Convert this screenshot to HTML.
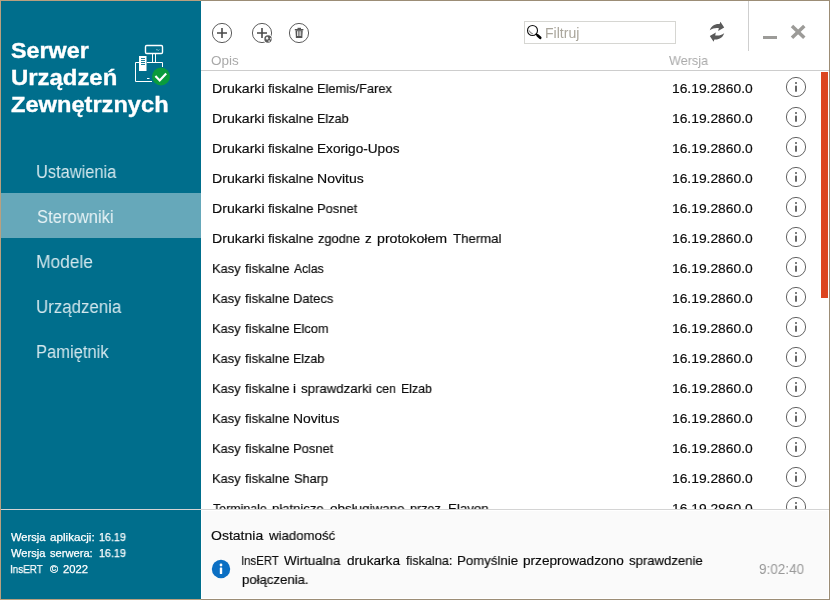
<!DOCTYPE html>
<html><head><meta charset="utf-8">
<style>
html,body{margin:0;padding:0;}
body{width:830px;height:600px;position:relative;overflow:hidden;background:#fff;font-family:"Liberation Sans",sans-serif;}
.abs{position:absolute;}
.t{position:absolute;white-space:nowrap;line-height:1;transform-origin:0 0;will-change:transform;}
#frame{left:0;top:0;width:828px;height:598px;border:1px solid #9c8d76;z-index:50;}
#frameL{left:0;top:0;width:200px;height:598px;border:1px solid #b9a07f;border-right:none;z-index:51;}
#side{left:1px;top:1px;width:200px;height:598px;background:#006e8c;}
#sel{left:1px;top:193px;width:200px;height:45px;background:#66a8ba;}
#hline{left:201px;top:70px;width:628px;height:1px;background:#cdcdcd;}
#vdiv{left:748px;top:1px;width:1px;height:50px;background:#cfcfcf;}
#status{left:201px;top:510px;width:626px;height:87px;background:#fafafa;border:1px solid #fff;}
#bline{left:1px;top:509px;width:828px;height:1px;background:#d4d4d4;}
#sb{left:821px;top:72px;width:7px;height:226px;background:#dc4520;}
#filter{left:524px;top:21px;width:150px;height:21px;border:1px solid #d6d6d2;background:#fff;}
#list{left:201px;top:71px;width:628px;height:438px;overflow:hidden;}
svg{position:absolute;left:0;top:0;}
</style></head>
<body>
<div class="abs" id="side"></div>
<div class="abs" id="sel"></div>
<div class="abs" id="hline"></div>
<div class="abs" id="vdiv"></div>
<div class="abs" id="sb"></div>
<div class="abs" id="filter"></div>
<span class="t" id="t0" style="left:11.00px;top:40.25px;font-size:22.5px;color:#fff;font-weight:700;transform:scaleX(1.0360);-webkit-text-stroke:0.35px #fff;">Serwer</span>
<span class="t" id="t1" style="left:10.54px;top:66.95px;font-size:22.5px;color:#fff;font-weight:700;transform:scaleX(1.0623);-webkit-text-stroke:0.35px #fff;">Urządzeń</span>
<span class="t" id="t2" style="left:11.20px;top:93.75px;font-size:22.5px;color:#fff;font-weight:700;transform:scaleX(1.0503);-webkit-text-stroke:0.35px #fff;">Zewnętrznych</span>
<span class="t" id="t3" style="left:36.09px;top:162.76px;font-size:18px;color:#d3e7ed;transform:scaleX(0.9122);">Ustawienia</span>
<span class="t" id="t4" style="left:36.60px;top:207.76px;font-size:18px;color:#e8f3f6;transform:scaleX(0.9228);">Sterowniki</span>
<span class="t" id="t5" style="left:36.03px;top:252.76px;font-size:18px;color:#d3e7ed;transform:scaleX(0.9651);">Modele</span>
<span class="t" id="t6" style="left:36.06px;top:297.76px;font-size:18px;color:#d3e7ed;transform:scaleX(0.9370);">Urządzenia</span>
<span class="t" id="t7" style="left:36.08px;top:342.76px;font-size:18px;color:#d3e7ed;transform:scaleX(0.9186);">Pamiętnik</span>
<span class="t" id="t8" style="left:11.30px;top:531.89px;font-size:11px;color:#fff;transform:scaleX(1.0084);-webkit-text-stroke:0.25px #fff;">Wersja</span>
<span class="t" id="t9" style="left:50.10px;top:531.89px;font-size:11px;color:#fff;transform:scaleX(1.0587);-webkit-text-stroke:0.25px #fff;">aplikacji:</span>
<span class="t" id="t10" style="left:99.40px;top:531.89px;font-size:11px;color:#fff;transform:scaleX(0.9741);-webkit-text-stroke:0.25px #fff;">16.19</span>
<span class="t" id="t11" style="left:11.30px;top:547.89px;font-size:11px;color:#fff;transform:scaleX(1.0084);-webkit-text-stroke:0.25px #fff;">Wersja</span>
<span class="t" id="t12" style="left:50.10px;top:547.89px;font-size:11px;color:#fff;transform:scaleX(1.0113);-webkit-text-stroke:0.25px #fff;">serwera:</span>
<span class="t" id="t13" style="left:99.40px;top:547.89px;font-size:11px;color:#fff;transform:scaleX(0.9741);-webkit-text-stroke:0.25px #fff;">16.19</span>
<span class="t" id="t14" style="left:10.40px;top:564.09px;font-size:11px;color:#fff;transform:scaleX(0.8978);-webkit-text-stroke:0.25px #fff;">InsERT</span>
<span class="t" id="t15" style="left:49.60px;top:564.09px;font-size:11px;color:#fff;-webkit-text-stroke:0.25px #fff;">©</span>
<span class="t" id="t16" style="left:62.60px;top:564.09px;font-size:11px;color:#fff;transform:scaleX(1.0225);-webkit-text-stroke:0.25px #fff;">2022</span>
<span class="t" id="t17" style="left:210.90px;top:54.37px;font-size:13.5px;color:#a9a9a9;transform:scaleX(0.9890);">Opis</span>
<span class="t" id="t18" style="left:669.30px;top:54.37px;font-size:13.5px;color:#a9a9a9;transform:scaleX(0.9349);">Wersja</span>
<span class="t" id="t19" style="left:544.69px;top:25.75px;font-size:14px;color:#aaa69c;transform:scaleX(1.0057);">Filtruj</span>
<span class="t" id="t20" style="left:212.15px;top:81.77px;font-size:13.5px;color:#0c0c0c;transform:scaleX(1.0455);-webkit-text-stroke:0.18px #0c0c0c;">Drukarki</span>
<span class="t" id="t21" style="left:267.90px;top:81.77px;font-size:13.5px;color:#0c0c0c;transform:scaleX(0.9941);-webkit-text-stroke:0.18px #0c0c0c;">fiskalne</span>
<span class="t" id="t22" style="left:316.85px;top:81.77px;font-size:13.5px;color:#0c0c0c;transform:scaleX(0.9511);-webkit-text-stroke:0.18px #0c0c0c;">Elemis/Farex</span>
<span class="t" id="t23" style="left:672.08px;top:81.77px;font-size:13.5px;color:#0c0c0c;transform:scaleX(1.0231);-webkit-text-stroke:0.18px #0c0c0c;">16.19.2860.0</span>
<span class="t" id="t24" style="left:212.15px;top:111.77px;font-size:13.5px;color:#0c0c0c;transform:scaleX(1.0455);-webkit-text-stroke:0.18px #0c0c0c;">Drukarki</span>
<span class="t" id="t25" style="left:267.90px;top:111.77px;font-size:13.5px;color:#0c0c0c;transform:scaleX(0.9941);-webkit-text-stroke:0.18px #0c0c0c;">fiskalne</span>
<span class="t" id="t26" style="left:316.86px;top:111.77px;font-size:13.5px;color:#0c0c0c;transform:scaleX(0.9361);-webkit-text-stroke:0.18px #0c0c0c;">Elzab</span>
<span class="t" id="t27" style="left:672.08px;top:111.77px;font-size:13.5px;color:#0c0c0c;transform:scaleX(1.0231);-webkit-text-stroke:0.18px #0c0c0c;">16.19.2860.0</span>
<span class="t" id="t28" style="left:212.15px;top:141.77px;font-size:13.5px;color:#0c0c0c;transform:scaleX(1.0455);-webkit-text-stroke:0.18px #0c0c0c;">Drukarki</span>
<span class="t" id="t29" style="left:267.90px;top:141.77px;font-size:13.5px;color:#0c0c0c;transform:scaleX(0.9941);-webkit-text-stroke:0.18px #0c0c0c;">fiskalne</span>
<span class="t" id="t30" style="left:316.79px;top:141.77px;font-size:13.5px;color:#0c0c0c;transform:scaleX(1.0094);-webkit-text-stroke:0.18px #0c0c0c;">Exorigo-Upos</span>
<span class="t" id="t31" style="left:672.08px;top:141.77px;font-size:13.5px;color:#0c0c0c;transform:scaleX(1.0231);-webkit-text-stroke:0.18px #0c0c0c;">16.19.2860.0</span>
<span class="t" id="t32" style="left:212.15px;top:171.77px;font-size:13.5px;color:#0c0c0c;transform:scaleX(1.0455);-webkit-text-stroke:0.18px #0c0c0c;">Drukarki</span>
<span class="t" id="t33" style="left:267.90px;top:171.77px;font-size:13.5px;color:#0c0c0c;transform:scaleX(0.9941);-webkit-text-stroke:0.18px #0c0c0c;">fiskalne</span>
<span class="t" id="t34" style="left:316.76px;top:171.77px;font-size:13.5px;color:#0c0c0c;transform:scaleX(1.0392);-webkit-text-stroke:0.18px #0c0c0c;">Novitus</span>
<span class="t" id="t35" style="left:672.08px;top:171.77px;font-size:13.5px;color:#0c0c0c;transform:scaleX(1.0231);-webkit-text-stroke:0.18px #0c0c0c;">16.19.2860.0</span>
<span class="t" id="t36" style="left:212.15px;top:201.77px;font-size:13.5px;color:#0c0c0c;transform:scaleX(1.0455);-webkit-text-stroke:0.18px #0c0c0c;">Drukarki</span>
<span class="t" id="t37" style="left:267.90px;top:201.77px;font-size:13.5px;color:#0c0c0c;transform:scaleX(0.9941);-webkit-text-stroke:0.18px #0c0c0c;">fiskalne</span>
<span class="t" id="t38" style="left:316.84px;top:201.77px;font-size:13.5px;color:#0c0c0c;transform:scaleX(0.9593);-webkit-text-stroke:0.18px #0c0c0c;">Posnet</span>
<span class="t" id="t39" style="left:672.08px;top:201.77px;font-size:13.5px;color:#0c0c0c;transform:scaleX(1.0231);-webkit-text-stroke:0.18px #0c0c0c;">16.19.2860.0</span>
<span class="t" id="t40" style="left:212.15px;top:231.77px;font-size:13.5px;color:#0c0c0c;transform:scaleX(1.0455);-webkit-text-stroke:0.18px #0c0c0c;">Drukarki</span>
<span class="t" id="t41" style="left:267.90px;top:231.77px;font-size:13.5px;color:#0c0c0c;transform:scaleX(0.9941);-webkit-text-stroke:0.18px #0c0c0c;">fiskalne</span>
<span class="t" id="t42" style="left:317.80px;top:231.77px;font-size:13.5px;color:#0c0c0c;transform:scaleX(0.9479);-webkit-text-stroke:0.18px #0c0c0c;">zgodne</span>
<span class="t" id="t43" style="left:365.30px;top:231.77px;font-size:13.5px;color:#0c0c0c;-webkit-text-stroke:0.18px #0c0c0c;">z</span>
<span class="t" id="t44" style="left:376.80px;top:231.77px;font-size:13.5px;color:#0c0c0c;transform:scaleX(1.0506);-webkit-text-stroke:0.18px #0c0c0c;">protokołem</span>
<span class="t" id="t45" style="left:452.70px;top:231.77px;font-size:13.5px;color:#0c0c0c;transform:scaleX(0.9796);-webkit-text-stroke:0.18px #0c0c0c;">Thermal</span>
<span class="t" id="t46" style="left:672.08px;top:231.77px;font-size:13.5px;color:#0c0c0c;transform:scaleX(1.0231);-webkit-text-stroke:0.18px #0c0c0c;">16.19.2860.0</span>
<span class="t" id="t47" style="left:212.25px;top:261.77px;font-size:13.5px;color:#0c0c0c;transform:scaleX(0.9534);-webkit-text-stroke:0.18px #0c0c0c;">Kasy</span>
<span class="t" id="t48" style="left:245.00px;top:261.77px;font-size:13.5px;color:#0c0c0c;transform:scaleX(0.9720);-webkit-text-stroke:0.18px #0c0c0c;">fiskalne</span>
<span class="t" id="t49" style="left:293.90px;top:261.77px;font-size:13.5px;color:#0c0c0c;transform:scaleX(0.8989);-webkit-text-stroke:0.18px #0c0c0c;">Aclas</span>
<span class="t" id="t50" style="left:672.08px;top:261.77px;font-size:13.5px;color:#0c0c0c;transform:scaleX(1.0231);-webkit-text-stroke:0.18px #0c0c0c;">16.19.2860.0</span>
<span class="t" id="t51" style="left:212.25px;top:291.77px;font-size:13.5px;color:#0c0c0c;transform:scaleX(0.9534);-webkit-text-stroke:0.18px #0c0c0c;">Kasy</span>
<span class="t" id="t52" style="left:245.00px;top:291.77px;font-size:13.5px;color:#0c0c0c;transform:scaleX(0.9720);-webkit-text-stroke:0.18px #0c0c0c;">fiskalne</span>
<span class="t" id="t53" style="left:292.94px;top:291.77px;font-size:13.5px;color:#0c0c0c;transform:scaleX(0.9596);-webkit-text-stroke:0.18px #0c0c0c;">Datecs</span>
<span class="t" id="t54" style="left:672.08px;top:291.77px;font-size:13.5px;color:#0c0c0c;transform:scaleX(1.0231);-webkit-text-stroke:0.18px #0c0c0c;">16.19.2860.0</span>
<span class="t" id="t55" style="left:212.25px;top:321.77px;font-size:13.5px;color:#0c0c0c;transform:scaleX(0.9534);-webkit-text-stroke:0.18px #0c0c0c;">Kasy</span>
<span class="t" id="t56" style="left:245.00px;top:321.77px;font-size:13.5px;color:#0c0c0c;transform:scaleX(0.9720);-webkit-text-stroke:0.18px #0c0c0c;">fiskalne</span>
<span class="t" id="t57" style="left:292.95px;top:321.77px;font-size:13.5px;color:#0c0c0c;transform:scaleX(0.9487);-webkit-text-stroke:0.18px #0c0c0c;">Elcom</span>
<span class="t" id="t58" style="left:672.08px;top:321.77px;font-size:13.5px;color:#0c0c0c;transform:scaleX(1.0231);-webkit-text-stroke:0.18px #0c0c0c;">16.19.2860.0</span>
<span class="t" id="t59" style="left:212.25px;top:351.77px;font-size:13.5px;color:#0c0c0c;transform:scaleX(0.9534);-webkit-text-stroke:0.18px #0c0c0c;">Kasy</span>
<span class="t" id="t60" style="left:245.00px;top:351.77px;font-size:13.5px;color:#0c0c0c;transform:scaleX(0.9720);-webkit-text-stroke:0.18px #0c0c0c;">fiskalne</span>
<span class="t" id="t61" style="left:292.97px;top:351.77px;font-size:13.5px;color:#0c0c0c;transform:scaleX(0.9268);-webkit-text-stroke:0.18px #0c0c0c;">Elzab</span>
<span class="t" id="t62" style="left:672.08px;top:351.77px;font-size:13.5px;color:#0c0c0c;transform:scaleX(1.0231);-webkit-text-stroke:0.18px #0c0c0c;">16.19.2860.0</span>
<span class="t" id="t63" style="left:212.25px;top:381.77px;font-size:13.5px;color:#0c0c0c;transform:scaleX(0.9534);-webkit-text-stroke:0.18px #0c0c0c;">Kasy</span>
<span class="t" id="t64" style="left:245.00px;top:381.77px;font-size:13.5px;color:#0c0c0c;transform:scaleX(0.9720);-webkit-text-stroke:0.18px #0c0c0c;">fiskalne</span>
<span class="t" id="t65" style="left:293.15px;top:381.77px;font-size:13.5px;color:#0c0c0c;-webkit-text-stroke:0.18px #0c0c0c;">i</span>
<span class="t" id="t66" style="left:300.60px;top:381.77px;font-size:13.5px;color:#0c0c0c;transform:scaleX(0.9802);-webkit-text-stroke:0.18px #0c0c0c;">sprawdzarki</span>
<span class="t" id="t67" style="left:376.00px;top:381.77px;font-size:13.5px;color:#0c0c0c;transform:scaleX(0.9173);-webkit-text-stroke:0.18px #0c0c0c;">cen</span>
<span class="t" id="t68" style="left:400.99px;top:381.77px;font-size:13.5px;color:#0c0c0c;transform:scaleX(0.9144);-webkit-text-stroke:0.18px #0c0c0c;">Elzab</span>
<span class="t" id="t69" style="left:672.08px;top:381.77px;font-size:13.5px;color:#0c0c0c;transform:scaleX(1.0231);-webkit-text-stroke:0.18px #0c0c0c;">16.19.2860.0</span>
<span class="t" id="t70" style="left:212.25px;top:411.77px;font-size:13.5px;color:#0c0c0c;transform:scaleX(0.9534);-webkit-text-stroke:0.18px #0c0c0c;">Kasy</span>
<span class="t" id="t71" style="left:245.00px;top:411.77px;font-size:13.5px;color:#0c0c0c;transform:scaleX(0.9720);-webkit-text-stroke:0.18px #0c0c0c;">fiskalne</span>
<span class="t" id="t72" style="left:292.87px;top:411.77px;font-size:13.5px;color:#0c0c0c;transform:scaleX(1.0302);-webkit-text-stroke:0.18px #0c0c0c;">Novitus</span>
<span class="t" id="t73" style="left:672.08px;top:411.77px;font-size:13.5px;color:#0c0c0c;transform:scaleX(1.0231);-webkit-text-stroke:0.18px #0c0c0c;">16.19.2860.0</span>
<span class="t" id="t74" style="left:212.25px;top:441.77px;font-size:13.5px;color:#0c0c0c;transform:scaleX(0.9534);-webkit-text-stroke:0.18px #0c0c0c;">Kasy</span>
<span class="t" id="t75" style="left:245.00px;top:441.77px;font-size:13.5px;color:#0c0c0c;transform:scaleX(0.9720);-webkit-text-stroke:0.18px #0c0c0c;">fiskalne</span>
<span class="t" id="t76" style="left:292.94px;top:441.77px;font-size:13.5px;color:#0c0c0c;transform:scaleX(0.9593);-webkit-text-stroke:0.18px #0c0c0c;">Posnet</span>
<span class="t" id="t77" style="left:672.08px;top:441.77px;font-size:13.5px;color:#0c0c0c;transform:scaleX(1.0231);-webkit-text-stroke:0.18px #0c0c0c;">16.19.2860.0</span>
<span class="t" id="t78" style="left:212.25px;top:471.77px;font-size:13.5px;color:#0c0c0c;transform:scaleX(0.9534);-webkit-text-stroke:0.18px #0c0c0c;">Kasy</span>
<span class="t" id="t79" style="left:245.00px;top:471.77px;font-size:13.5px;color:#0c0c0c;transform:scaleX(0.9720);-webkit-text-stroke:0.18px #0c0c0c;">fiskalne</span>
<span class="t" id="t80" style="left:293.90px;top:471.77px;font-size:13.5px;color:#0c0c0c;transform:scaleX(0.9460);-webkit-text-stroke:0.18px #0c0c0c;">Sharp</span>
<span class="t" id="t81" style="left:672.08px;top:471.77px;font-size:13.5px;color:#0c0c0c;transform:scaleX(1.0231);-webkit-text-stroke:0.18px #0c0c0c;">16.19.2860.0</span>
<span class="t" id="t82" style="left:213.20px;top:501.77px;font-size:13.5px;color:#0c0c0c;transform:scaleX(0.9205);-webkit-text-stroke:0.18px #0c0c0c;">Terminale</span>
<span class="t" id="t83" style="left:272.40px;top:501.77px;font-size:13.5px;color:#0c0c0c;transform:scaleX(0.9702);-webkit-text-stroke:0.18px #0c0c0c;">płatnicze</span>
<span class="t" id="t84" style="left:329.50px;top:501.77px;font-size:13.5px;color:#0c0c0c;transform:scaleX(0.9940);-webkit-text-stroke:0.18px #0c0c0c;">obsługiwane</span>
<span class="t" id="t85" style="left:409.50px;top:501.77px;font-size:13.5px;color:#0c0c0c;transform:scaleX(0.9320);-webkit-text-stroke:0.18px #0c0c0c;">przez</span>
<span class="t" id="t86" style="left:447.62px;top:501.77px;font-size:13.5px;color:#0c0c0c;transform:scaleX(0.9832);-webkit-text-stroke:0.18px #0c0c0c;">Elavon</span>
<span class="t" id="t87" style="left:672.08px;top:501.77px;font-size:13.5px;color:#0c0c0c;transform:scaleX(1.0231);-webkit-text-stroke:0.18px #0c0c0c;">16.19.2860.0</span>
<div class="abs" id="status"></div>
<div class="abs" id="bline"></div>
<span class="t" id="t88" style="left:210.90px;top:528.57px;font-size:13.5px;color:#0c0c0c;transform:scaleX(1.0381);-webkit-text-stroke:0.18px #0c0c0c;">Ostatnia</span>
<span class="t" id="t89" style="left:268.58px;top:528.57px;font-size:13.5px;color:#0c0c0c;transform:scaleX(0.9800);-webkit-text-stroke:0.18px #0c0c0c;">wiadomość</span>
<span class="t" id="t90" style="left:240.86px;top:553.57px;font-size:13.5px;color:#0c0c0c;transform:scaleX(0.8433);-webkit-text-stroke:0.18px #0c0c0c;">InsERT</span>
<span class="t" id="t91" style="left:284.20px;top:553.57px;font-size:13.5px;color:#0c0c0c;transform:scaleX(0.9894);-webkit-text-stroke:0.18px #0c0c0c;">Wirtualna</span>
<span class="t" id="t92" style="left:347.20px;top:553.57px;font-size:13.5px;color:#0c0c0c;transform:scaleX(1.0091);-webkit-text-stroke:0.18px #0c0c0c;">drukarka</span>
<span class="t" id="t93" style="left:406.20px;top:553.57px;font-size:13.5px;color:#0c0c0c;transform:scaleX(0.9370);-webkit-text-stroke:0.18px #0c0c0c;">fiskalna:</span>
<span class="t" id="t94" style="left:456.82px;top:553.57px;font-size:13.5px;color:#0c0c0c;transform:scaleX(0.9808);-webkit-text-stroke:0.18px #0c0c0c;">Pomyślnie</span>
<span class="t" id="t95" style="left:523.00px;top:553.57px;font-size:13.5px;color:#0c0c0c;transform:scaleX(1.0090);-webkit-text-stroke:0.18px #0c0c0c;">przeprowadzono</span>
<span class="t" id="t96" style="left:629.20px;top:553.57px;font-size:13.5px;color:#0c0c0c;transform:scaleX(0.9736);-webkit-text-stroke:0.18px #0c0c0c;">sprawdzenie</span>
<span class="t" id="t97" style="left:241.60px;top:572.57px;font-size:13.5px;color:#0c0c0c;transform:scaleX(0.9756);-webkit-text-stroke:0.18px #0c0c0c;">połączenia.</span>
<span class="t" id="t98" style="left:759.30px;top:561.95px;font-size:14px;color:#999;transform:scaleX(0.9633);">9:02:40</span>
<svg width="830" height="600" viewBox="0 0 830 600">
<!-- logo -->
<g fill="none" stroke="#fff" stroke-width="1">
  <rect x="145.5" y="45.5" width="17" height="8" rx="1.2" stroke-width="1.4"/>
  <path d="M152.5 54V62M155.5 54V62"/>
  <path d="M139 62.5H135.5V81.5H152M147 62.5H162.5V67"/>
  <path d="M147 78.5H149.5" stroke-width="1"/>
  <path d="M156 50q1-1 1.7 0t1.7-.4" stroke="#bcd8e1" stroke-width="0.7"/>
</g>
<rect x="139" y="56" width="7.5" height="15" fill="#fff"/>
<path d="M141 58.5h4M141 60.5h4M141 62.5h4M141 64.5h4" stroke="#006e8c" stroke-width="0.9"/>
<circle cx="161" cy="76.5" r="9" fill="#0a9b3c"/>
<path d="M155.4 76L159.7 80.4L166.2 73.4" fill="none" stroke="#fff" stroke-width="2.2"/>
<!-- toolbar icons -->
<g fill="none" stroke="#4a4a4a">
  <circle cx="222" cy="33" r="9.6" stroke-width="0.9"/>
  <path d="M217 33H227M222 28V38" stroke-width="1.6"/>
  <circle cx="262" cy="33" r="9.6" stroke-width="0.9"/>
  <path d="M257 33H267M262 28V38" stroke-width="1.6"/>
  <circle cx="299" cy="33" r="9.6" stroke-width="0.9"/>
</g>
<circle cx="268" cy="39" r="4.7" fill="#fff"/>
<circle cx="268" cy="39" r="3.7" fill="#5c5c5c"/>
<ellipse cx="267.1" cy="38.3" rx="1.15" ry="1.45" fill="#f2f2f2"/>
<circle cx="270.6" cy="38.7" r="0.75" fill="#eee"/>
<circle cx="269.1" cy="41" r="0.85" fill="#eee"/>
<!-- trash -->
<g fill="#555">
  <rect x="297.5" y="27.8" width="3.5" height="1.2"/>
  <rect x="294.8" y="29" width="8.6" height="1.3"/>
  <path d="M295.5 30.3h7.2l-.4 7.6h-6.4z"/>
</g>
<path d="M297.5 31.2v4.8M299.1 31.2v4.8M300.7 31.2v4.8" stroke="#eee" stroke-width="0.9"/>
<!-- magnifier -->
<circle cx="532.5" cy="30.5" r="5" fill="none" stroke="#111" stroke-width="1.1"/>
<path d="M529 30.4q.8 3 3.9 3.5q-2.2-.8-3.9-3.5z" fill="#999" stroke="#777" stroke-width="0.6"/>
<path d="M535.8 33.8L538 35.8" stroke="#000" stroke-width="1.3"/><path d="M537.7 35.5L540.2 37.8" stroke="#000" stroke-width="2.7" stroke-linecap="round"/>
<!-- refresh -->
<g fill="#5a5a5a">
  <path d="M709.8 30.3C711 26.3 714.6 23.6 719.6 24L720.4 21.8L724.2 27.6L718.2 30.9L718.8 28.1C715.5 27.6 712.6 28.3 709.8 30.3Z"/>
  <path d="M724.2 33.2C723 37.2 719.4 39.9 714.4 39.5L713.6 41.7L709.8 35.9L715.8 32.6L715.2 35.4C718.5 35.9 721.4 35.2 724.2 33.2Z"/>
</g>
<!-- window buttons -->
<rect x="763" y="36" width="14" height="3" fill="#9c9b98"/>
<path d="M792 26L804.3 37.7M804.3 26L792 37.7" stroke="#9c9b98" stroke-width="3.5" fill="none"/>
<!-- info icons -->
<clipPath id="lc"><rect x="201" y="71" width="628" height="438"/></clipPath><g clip-path="url(#lc)">
<circle cx="796" cy="87" r="9.6" fill="none" stroke="#505050" stroke-width="0.9"/><circle cx="796" cy="83" r="1" fill="#555"/><rect x="795.1" y="85.7" width="1.8" height="6" fill="#555"/>
<circle cx="796" cy="117" r="9.6" fill="none" stroke="#505050" stroke-width="0.9"/><circle cx="796" cy="113" r="1" fill="#555"/><rect x="795.1" y="115.7" width="1.8" height="6" fill="#555"/>
<circle cx="796" cy="147" r="9.6" fill="none" stroke="#505050" stroke-width="0.9"/><circle cx="796" cy="143" r="1" fill="#555"/><rect x="795.1" y="145.7" width="1.8" height="6" fill="#555"/>
<circle cx="796" cy="177" r="9.6" fill="none" stroke="#505050" stroke-width="0.9"/><circle cx="796" cy="173" r="1" fill="#555"/><rect x="795.1" y="175.7" width="1.8" height="6" fill="#555"/>
<circle cx="796" cy="207" r="9.6" fill="none" stroke="#505050" stroke-width="0.9"/><circle cx="796" cy="203" r="1" fill="#555"/><rect x="795.1" y="205.7" width="1.8" height="6" fill="#555"/>
<circle cx="796" cy="237" r="9.6" fill="none" stroke="#505050" stroke-width="0.9"/><circle cx="796" cy="233" r="1" fill="#555"/><rect x="795.1" y="235.7" width="1.8" height="6" fill="#555"/>
<circle cx="796" cy="267" r="9.6" fill="none" stroke="#505050" stroke-width="0.9"/><circle cx="796" cy="263" r="1" fill="#555"/><rect x="795.1" y="265.7" width="1.8" height="6" fill="#555"/>
<circle cx="796" cy="297" r="9.6" fill="none" stroke="#505050" stroke-width="0.9"/><circle cx="796" cy="293" r="1" fill="#555"/><rect x="795.1" y="295.7" width="1.8" height="6" fill="#555"/>
<circle cx="796" cy="327" r="9.6" fill="none" stroke="#505050" stroke-width="0.9"/><circle cx="796" cy="323" r="1" fill="#555"/><rect x="795.1" y="325.7" width="1.8" height="6" fill="#555"/>
<circle cx="796" cy="357" r="9.6" fill="none" stroke="#505050" stroke-width="0.9"/><circle cx="796" cy="353" r="1" fill="#555"/><rect x="795.1" y="355.7" width="1.8" height="6" fill="#555"/>
<circle cx="796" cy="387" r="9.6" fill="none" stroke="#505050" stroke-width="0.9"/><circle cx="796" cy="383" r="1" fill="#555"/><rect x="795.1" y="385.7" width="1.8" height="6" fill="#555"/>
<circle cx="796" cy="417" r="9.6" fill="none" stroke="#505050" stroke-width="0.9"/><circle cx="796" cy="413" r="1" fill="#555"/><rect x="795.1" y="415.7" width="1.8" height="6" fill="#555"/>
<circle cx="796" cy="447" r="9.6" fill="none" stroke="#505050" stroke-width="0.9"/><circle cx="796" cy="443" r="1" fill="#555"/><rect x="795.1" y="445.7" width="1.8" height="6" fill="#555"/>
<circle cx="796" cy="477" r="9.6" fill="none" stroke="#505050" stroke-width="0.9"/><circle cx="796" cy="473" r="1" fill="#555"/><rect x="795.1" y="475.7" width="1.8" height="6" fill="#555"/>
<circle cx="796" cy="507" r="9.6" fill="none" stroke="#505050" stroke-width="0.9"/><circle cx="796" cy="503" r="1" fill="#555"/><rect x="795.1" y="505.7" width="1.8" height="6" fill="#555"/>
</g>
<!-- blue info -->
<circle cx="221" cy="569" r="9.2" fill="#0b6fc3"/>
<circle cx="221" cy="565" r="1.4" fill="#fff"/>
<rect x="219.8" y="567.5" width="2.4" height="6.5" rx="0.6" fill="#fff"/>
</svg>
<div class="abs" id="frame"></div>
<div class="abs" id="frameL"></div>
</body></html>
